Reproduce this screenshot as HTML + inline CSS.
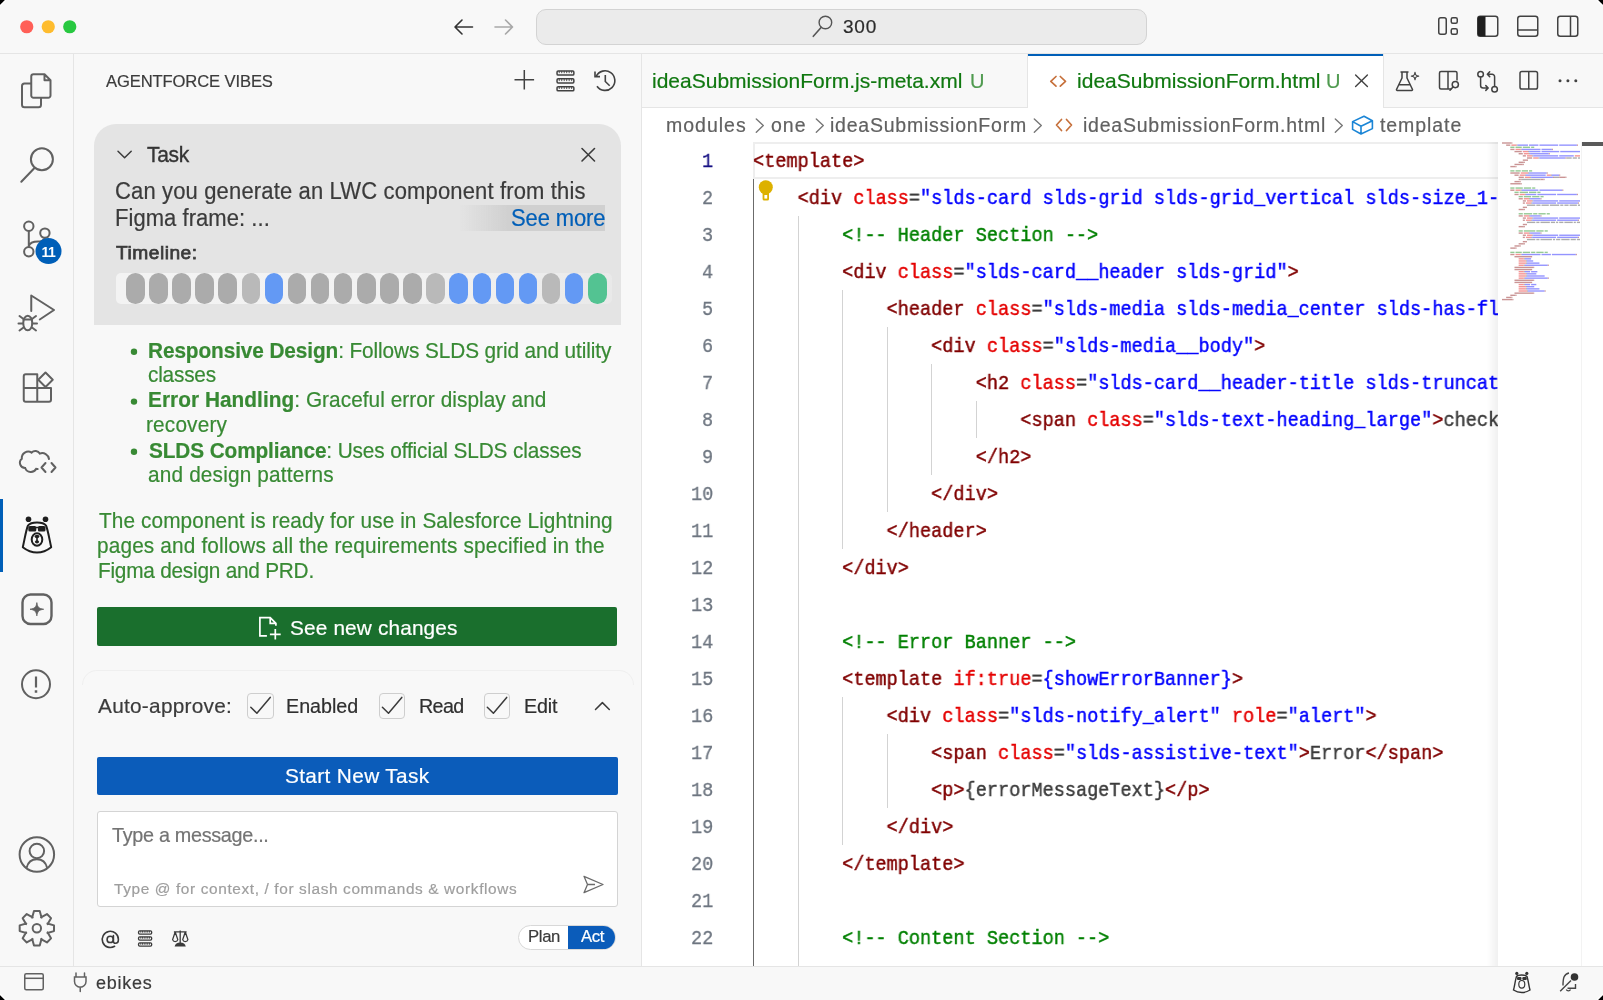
<!DOCTYPE html>
<html><head><meta charset="utf-8">
<style>
html,body{margin:0;padding:0;background:#000;}
body{width:1603px;height:1000px;overflow:hidden;position:relative;font-family:"Liberation Sans", sans-serif;}
#win{position:absolute;left:0;top:0;width:1603px;height:1000px;overflow:hidden;background:#f8f8f8;}
.t{position:absolute;white-space:pre;will-change:transform;}
.r{position:absolute;}
svg.ov{position:absolute;left:0;top:0;}
</style></head><body><div id="win">
<div class="r" style="left:0px;top:53px;width:1603px;height:1px;background:#e5e5e5;"></div><div class="r" style="left:536px;top:9px;width:611px;height:36px;box-sizing:border-box;border:1.3px solid #d3d3d3;border-radius:10px;background:#ebebeb"></div><div class="t" id="t300" style="left:842.50px;top:17.21px;font-size:19px;line-height:19px;color:#2b2b2b;letter-spacing:0.800px;-webkit-text-stroke:0.2px currentColor;">300</div><div class="r" style="left:73px;top:54px;width:1px;height:912px;background:#e5e5e5;"></div><div class="r" style="left:0px;top:499px;width:3px;height:73px;background:#005fb8;"></div><div class="r" style="left:0px;top:966px;width:1603px;height:1px;background:#e5e5e5;"></div><div class="t" id="ebikes" style="left:96.40px;top:973.96px;font-size:18px;line-height:18px;color:#3b3b3b;letter-spacing:0.720px;-webkit-text-stroke:0.2px currentColor;">ebikes</div><div class="r" style="left:641px;top:54px;width:1px;height:912px;background:#e5e5e5;"></div><div class="r" style="left:642px;top:107px;width:961px;height:1px;background:#e5e5e5;"></div><div class="r" style="left:1028px;top:54px;width:355px;height:54px;background:#ffffff;"></div><div class="r" style="left:1028px;top:54px;width:355px;height:2px;background:#005fb8;"></div><div class="r" style="left:1027px;top:54px;width:1px;height:53px;background:#e5e5e5;"></div><div class="r" style="left:1383px;top:54px;width:1px;height:53px;background:#e5e5e5;"></div><div class="r" style="left:642px;top:108px;width:961px;height:858px;background:#ffffff;"></div><div class="t" id="tab1" style="left:651.50px;top:70.02px;font-size:21px;line-height:21px;color:#107810;letter-spacing:-0.002px;-webkit-text-stroke:0.2px currentColor;">ideaSubmissionForm.js-meta.xml</div><div class="t" id="tab1u" style="left:970.30px;top:71.37px;font-size:20px;line-height:20px;color:#4f9a4f;letter-spacing:-4.000px;-webkit-text-stroke:0.2px currentColor;">U</div><div class="t" id="tab2" style="left:1076.50px;top:70.02px;font-size:21px;line-height:21px;color:#107810;letter-spacing:0.027px;-webkit-text-stroke:0.2px currentColor;">ideaSubmissionForm.html</div><div class="t" id="tab2u" style="left:1326.10px;top:71.37px;font-size:20px;line-height:20px;color:#4f9a4f;letter-spacing:1.400px;-webkit-text-stroke:0.2px currentColor;">U</div><div class="t" id="bc1" style="left:666.00px;top:115.69px;font-size:19.5px;line-height:19.5px;color:#616161;letter-spacing:1.000px;-webkit-text-stroke:0.2px currentColor;">modules</div><div class="t" id="bc2" style="left:771.00px;top:115.69px;font-size:19.5px;line-height:19.5px;color:#616161;letter-spacing:1.000px;-webkit-text-stroke:0.2px currentColor;">one</div><div class="t" id="bc3" style="left:830.00px;top:115.69px;font-size:19.5px;line-height:19.5px;color:#616161;letter-spacing:0.765px;-webkit-text-stroke:0.2px currentColor;">ideaSubmissionForm</div><div class="t" id="bc4" style="left:1083.00px;top:115.69px;font-size:19.5px;line-height:19.5px;color:#616161;letter-spacing:0.772px;-webkit-text-stroke:0.2px currentColor;">ideaSubmissionForm.html</div><div class="t" id="bc5" style="left:1380.20px;top:115.69px;font-size:19.5px;line-height:19.5px;color:#616161;letter-spacing:0.919px;-webkit-text-stroke:0.2px currentColor;">template</div><div class="r" style="left:753px;top:142px;width:760px;height:37px;box-sizing:border-box;border:2px solid #eeeeee;border-right:none"></div><div class="r" style="left:753.0px;top:179px;width:1.2000000000000455px;height:787px;background:#6b6b6b;"></div><div class="r" style="left:797.6px;top:216px;width:1.2000000000000455px;height:750px;background:#d3d3d3;"></div><div class="r" style="left:842.1px;top:290px;width:1.2000000000000455px;height:259px;background:#d3d3d3;"></div><div class="r" style="left:886.7px;top:327px;width:1.2000000000000455px;height:185px;background:#d3d3d3;"></div><div class="r" style="left:931.2px;top:364px;width:1.2000000000000455px;height:111px;background:#d3d3d3;"></div><div class="r" style="left:975.8px;top:401px;width:1.2000000000000455px;height:37px;background:#d3d3d3;"></div><div class="r" style="left:842.1px;top:697px;width:1.2000000000000455px;height:148px;background:#d3d3d3;"></div><div class="r" style="left:886.7px;top:734px;width:1.2000000000000455px;height:74px;background:#d3d3d3;"></div><div class="t" style="left:701.86px;top:151.57px;font-size:20.4px;line-height:20.4px;color:#171184;font-family:'Liberation Mono', monospace;transform:scaleX(0.9099942198212753);transform-origin:0 0;-webkit-text-stroke:0.3px currentColor;">1</div><div class="t" style="left:753.00px;top:151.57px;font-size:20.4px;line-height:20.4px;color:#3b3b3b;font-family:'Liberation Mono', monospace;transform:scaleX(0.9099942198212753);transform-origin:0 0;-webkit-text-stroke:0.45px currentColor;"><span style="color:#800000">&lt;template</span><span style="color:#800000">&gt;</span></div><div class="t" style="left:701.86px;top:188.57px;font-size:20.4px;line-height:20.4px;color:#6e7681;font-family:'Liberation Mono', monospace;transform:scaleX(0.9099942198212753);transform-origin:0 0;-webkit-text-stroke:0.3px currentColor;">2</div><div class="t" style="left:753.00px;top:188.57px;font-size:20.4px;line-height:20.4px;color:#3b3b3b;font-family:'Liberation Mono', monospace;transform:scaleX(0.9099942198212753);transform-origin:0 0;-webkit-text-stroke:0.45px currentColor;"><span style="color:#3b3b3b">    </span><span style="color:#800000">&lt;div</span><span style="color:#3b3b3b"> </span><span style="color:#e50000">class</span><span style="color:#3b3b3b">=</span><span style="color:#0000ff">&quot;slds-card slds-grid slds-grid_vertical slds-size_1-of-1&quot;</span><span style="color:#800000">&gt;</span></div><div class="t" style="left:701.86px;top:225.57px;font-size:20.4px;line-height:20.4px;color:#6e7681;font-family:'Liberation Mono', monospace;transform:scaleX(0.9099942198212753);transform-origin:0 0;-webkit-text-stroke:0.3px currentColor;">3</div><div class="t" style="left:753.00px;top:225.57px;font-size:20.4px;line-height:20.4px;color:#3b3b3b;font-family:'Liberation Mono', monospace;transform:scaleX(0.9099942198212753);transform-origin:0 0;-webkit-text-stroke:0.45px currentColor;"><span style="color:#3b3b3b">        </span><span style="color:#008000">&lt;!-- Header Section --&gt;</span></div><div class="t" style="left:701.86px;top:262.57px;font-size:20.4px;line-height:20.4px;color:#6e7681;font-family:'Liberation Mono', monospace;transform:scaleX(0.9099942198212753);transform-origin:0 0;-webkit-text-stroke:0.3px currentColor;">4</div><div class="t" style="left:753.00px;top:262.57px;font-size:20.4px;line-height:20.4px;color:#3b3b3b;font-family:'Liberation Mono', monospace;transform:scaleX(0.9099942198212753);transform-origin:0 0;-webkit-text-stroke:0.45px currentColor;"><span style="color:#3b3b3b">        </span><span style="color:#800000">&lt;div</span><span style="color:#3b3b3b"> </span><span style="color:#e50000">class</span><span style="color:#3b3b3b">=</span><span style="color:#0000ff">&quot;slds-card__header slds-grid&quot;</span><span style="color:#800000">&gt;</span></div><div class="t" style="left:701.86px;top:299.57px;font-size:20.4px;line-height:20.4px;color:#6e7681;font-family:'Liberation Mono', monospace;transform:scaleX(0.9099942198212753);transform-origin:0 0;-webkit-text-stroke:0.3px currentColor;">5</div><div class="t" style="left:753.00px;top:299.57px;font-size:20.4px;line-height:20.4px;color:#3b3b3b;font-family:'Liberation Mono', monospace;transform:scaleX(0.9099942198212753);transform-origin:0 0;-webkit-text-stroke:0.45px currentColor;"><span style="color:#3b3b3b">            </span><span style="color:#800000">&lt;header</span><span style="color:#3b3b3b"> </span><span style="color:#e50000">class</span><span style="color:#3b3b3b">=</span><span style="color:#0000ff">&quot;slds-media slds-media_center slds-has-flexi-truncate&quot;</span><span style="color:#800000">&gt;</span></div><div class="t" style="left:701.86px;top:336.57px;font-size:20.4px;line-height:20.4px;color:#6e7681;font-family:'Liberation Mono', monospace;transform:scaleX(0.9099942198212753);transform-origin:0 0;-webkit-text-stroke:0.3px currentColor;">6</div><div class="t" style="left:753.00px;top:336.57px;font-size:20.4px;line-height:20.4px;color:#3b3b3b;font-family:'Liberation Mono', monospace;transform:scaleX(0.9099942198212753);transform-origin:0 0;-webkit-text-stroke:0.45px currentColor;"><span style="color:#3b3b3b">                </span><span style="color:#800000">&lt;div</span><span style="color:#3b3b3b"> </span><span style="color:#e50000">class</span><span style="color:#3b3b3b">=</span><span style="color:#0000ff">&quot;slds-media__body&quot;</span><span style="color:#800000">&gt;</span></div><div class="t" style="left:701.86px;top:373.57px;font-size:20.4px;line-height:20.4px;color:#6e7681;font-family:'Liberation Mono', monospace;transform:scaleX(0.9099942198212753);transform-origin:0 0;-webkit-text-stroke:0.3px currentColor;">7</div><div class="t" style="left:753.00px;top:373.57px;font-size:20.4px;line-height:20.4px;color:#3b3b3b;font-family:'Liberation Mono', monospace;transform:scaleX(0.9099942198212753);transform-origin:0 0;-webkit-text-stroke:0.45px currentColor;"><span style="color:#3b3b3b">                    </span><span style="color:#800000">&lt;h2</span><span style="color:#3b3b3b"> </span><span style="color:#e50000">class</span><span style="color:#3b3b3b">=</span><span style="color:#0000ff">&quot;slds-card__header-title slds-truncate&quot;</span><span style="color:#3b3b3b"> </span><span style="color:#e50000">title</span><span style="color:#3b3b3b">=</span><span style="color:#0000ff">&quot;Submit&quot;</span><span style="color:#800000">&gt;</span></div><div class="t" style="left:701.86px;top:410.57px;font-size:20.4px;line-height:20.4px;color:#6e7681;font-family:'Liberation Mono', monospace;transform:scaleX(0.9099942198212753);transform-origin:0 0;-webkit-text-stroke:0.3px currentColor;">8</div><div class="t" style="left:753.00px;top:410.57px;font-size:20.4px;line-height:20.4px;color:#3b3b3b;font-family:'Liberation Mono', monospace;transform:scaleX(0.9099942198212753);transform-origin:0 0;-webkit-text-stroke:0.45px currentColor;"><span style="color:#3b3b3b">                        </span><span style="color:#800000">&lt;span</span><span style="color:#3b3b3b"> </span><span style="color:#e50000">class</span><span style="color:#3b3b3b">=</span><span style="color:#0000ff">&quot;slds-text-heading_large&quot;</span><span style="color:#800000">&gt;</span><span style="color:#3b3b3b">check data here</span><span style="color:#800000">&lt;/span</span><span style="color:#800000">&gt;</span></div><div class="t" style="left:701.86px;top:447.57px;font-size:20.4px;line-height:20.4px;color:#6e7681;font-family:'Liberation Mono', monospace;transform:scaleX(0.9099942198212753);transform-origin:0 0;-webkit-text-stroke:0.3px currentColor;">9</div><div class="t" style="left:753.00px;top:447.57px;font-size:20.4px;line-height:20.4px;color:#3b3b3b;font-family:'Liberation Mono', monospace;transform:scaleX(0.9099942198212753);transform-origin:0 0;-webkit-text-stroke:0.45px currentColor;"><span style="color:#3b3b3b">                    </span><span style="color:#800000">&lt;/h2</span><span style="color:#800000">&gt;</span></div><div class="t" style="left:690.72px;top:484.57px;font-size:20.4px;line-height:20.4px;color:#6e7681;font-family:'Liberation Mono', monospace;transform:scaleX(0.9099942198212753);transform-origin:0 0;-webkit-text-stroke:0.3px currentColor;">10</div><div class="t" style="left:753.00px;top:484.57px;font-size:20.4px;line-height:20.4px;color:#3b3b3b;font-family:'Liberation Mono', monospace;transform:scaleX(0.9099942198212753);transform-origin:0 0;-webkit-text-stroke:0.45px currentColor;"><span style="color:#3b3b3b">                </span><span style="color:#800000">&lt;/div</span><span style="color:#800000">&gt;</span></div><div class="t" style="left:690.72px;top:521.57px;font-size:20.4px;line-height:20.4px;color:#6e7681;font-family:'Liberation Mono', monospace;transform:scaleX(0.9099942198212753);transform-origin:0 0;-webkit-text-stroke:0.3px currentColor;">11</div><div class="t" style="left:753.00px;top:521.57px;font-size:20.4px;line-height:20.4px;color:#3b3b3b;font-family:'Liberation Mono', monospace;transform:scaleX(0.9099942198212753);transform-origin:0 0;-webkit-text-stroke:0.45px currentColor;"><span style="color:#3b3b3b">            </span><span style="color:#800000">&lt;/header</span><span style="color:#800000">&gt;</span></div><div class="t" style="left:690.72px;top:558.57px;font-size:20.4px;line-height:20.4px;color:#6e7681;font-family:'Liberation Mono', monospace;transform:scaleX(0.9099942198212753);transform-origin:0 0;-webkit-text-stroke:0.3px currentColor;">12</div><div class="t" style="left:753.00px;top:558.57px;font-size:20.4px;line-height:20.4px;color:#3b3b3b;font-family:'Liberation Mono', monospace;transform:scaleX(0.9099942198212753);transform-origin:0 0;-webkit-text-stroke:0.45px currentColor;"><span style="color:#3b3b3b">        </span><span style="color:#800000">&lt;/div</span><span style="color:#800000">&gt;</span></div><div class="t" style="left:690.72px;top:595.57px;font-size:20.4px;line-height:20.4px;color:#6e7681;font-family:'Liberation Mono', monospace;transform:scaleX(0.9099942198212753);transform-origin:0 0;-webkit-text-stroke:0.3px currentColor;">13</div><div class="t" style="left:690.72px;top:632.57px;font-size:20.4px;line-height:20.4px;color:#6e7681;font-family:'Liberation Mono', monospace;transform:scaleX(0.9099942198212753);transform-origin:0 0;-webkit-text-stroke:0.3px currentColor;">14</div><div class="t" style="left:753.00px;top:632.57px;font-size:20.4px;line-height:20.4px;color:#3b3b3b;font-family:'Liberation Mono', monospace;transform:scaleX(0.9099942198212753);transform-origin:0 0;-webkit-text-stroke:0.45px currentColor;"><span style="color:#3b3b3b">        </span><span style="color:#008000">&lt;!-- Error Banner --&gt;</span></div><div class="t" style="left:690.72px;top:669.57px;font-size:20.4px;line-height:20.4px;color:#6e7681;font-family:'Liberation Mono', monospace;transform:scaleX(0.9099942198212753);transform-origin:0 0;-webkit-text-stroke:0.3px currentColor;">15</div><div class="t" style="left:753.00px;top:669.57px;font-size:20.4px;line-height:20.4px;color:#3b3b3b;font-family:'Liberation Mono', monospace;transform:scaleX(0.9099942198212753);transform-origin:0 0;-webkit-text-stroke:0.45px currentColor;"><span style="color:#3b3b3b">        </span><span style="color:#800000">&lt;template</span><span style="color:#3b3b3b"> </span><span style="color:#e50000">if:true</span><span style="color:#3b3b3b">=</span><span style="color:#0000ff">{showErrorBanner}</span><span style="color:#800000">&gt;</span></div><div class="t" style="left:690.72px;top:706.57px;font-size:20.4px;line-height:20.4px;color:#6e7681;font-family:'Liberation Mono', monospace;transform:scaleX(0.9099942198212753);transform-origin:0 0;-webkit-text-stroke:0.3px currentColor;">16</div><div class="t" style="left:753.00px;top:706.57px;font-size:20.4px;line-height:20.4px;color:#3b3b3b;font-family:'Liberation Mono', monospace;transform:scaleX(0.9099942198212753);transform-origin:0 0;-webkit-text-stroke:0.45px currentColor;"><span style="color:#3b3b3b">            </span><span style="color:#800000">&lt;div</span><span style="color:#3b3b3b"> </span><span style="color:#e50000">class</span><span style="color:#3b3b3b">=</span><span style="color:#0000ff">&quot;slds-notify_alert&quot;</span><span style="color:#3b3b3b"> </span><span style="color:#e50000">role</span><span style="color:#3b3b3b">=</span><span style="color:#0000ff">&quot;alert&quot;</span><span style="color:#800000">&gt;</span></div><div class="t" style="left:690.72px;top:743.57px;font-size:20.4px;line-height:20.4px;color:#6e7681;font-family:'Liberation Mono', monospace;transform:scaleX(0.9099942198212753);transform-origin:0 0;-webkit-text-stroke:0.3px currentColor;">17</div><div class="t" style="left:753.00px;top:743.57px;font-size:20.4px;line-height:20.4px;color:#3b3b3b;font-family:'Liberation Mono', monospace;transform:scaleX(0.9099942198212753);transform-origin:0 0;-webkit-text-stroke:0.45px currentColor;"><span style="color:#3b3b3b">                </span><span style="color:#800000">&lt;span</span><span style="color:#3b3b3b"> </span><span style="color:#e50000">class</span><span style="color:#3b3b3b">=</span><span style="color:#0000ff">&quot;slds-assistive-text&quot;</span><span style="color:#800000">&gt;</span><span style="color:#3b3b3b">Error</span><span style="color:#800000">&lt;/span</span><span style="color:#800000">&gt;</span></div><div class="t" style="left:690.72px;top:780.57px;font-size:20.4px;line-height:20.4px;color:#6e7681;font-family:'Liberation Mono', monospace;transform:scaleX(0.9099942198212753);transform-origin:0 0;-webkit-text-stroke:0.3px currentColor;">18</div><div class="t" style="left:753.00px;top:780.57px;font-size:20.4px;line-height:20.4px;color:#3b3b3b;font-family:'Liberation Mono', monospace;transform:scaleX(0.9099942198212753);transform-origin:0 0;-webkit-text-stroke:0.45px currentColor;"><span style="color:#3b3b3b">                </span><span style="color:#800000">&lt;p</span><span style="color:#800000">&gt;</span><span style="color:#3b3b3b">{errorMessageText}</span><span style="color:#800000">&lt;/p</span><span style="color:#800000">&gt;</span></div><div class="t" style="left:690.72px;top:817.57px;font-size:20.4px;line-height:20.4px;color:#6e7681;font-family:'Liberation Mono', monospace;transform:scaleX(0.9099942198212753);transform-origin:0 0;-webkit-text-stroke:0.3px currentColor;">19</div><div class="t" style="left:753.00px;top:817.57px;font-size:20.4px;line-height:20.4px;color:#3b3b3b;font-family:'Liberation Mono', monospace;transform:scaleX(0.9099942198212753);transform-origin:0 0;-webkit-text-stroke:0.45px currentColor;"><span style="color:#3b3b3b">            </span><span style="color:#800000">&lt;/div</span><span style="color:#800000">&gt;</span></div><div class="t" style="left:690.72px;top:854.57px;font-size:20.4px;line-height:20.4px;color:#6e7681;font-family:'Liberation Mono', monospace;transform:scaleX(0.9099942198212753);transform-origin:0 0;-webkit-text-stroke:0.3px currentColor;">20</div><div class="t" style="left:753.00px;top:854.57px;font-size:20.4px;line-height:20.4px;color:#3b3b3b;font-family:'Liberation Mono', monospace;transform:scaleX(0.9099942198212753);transform-origin:0 0;-webkit-text-stroke:0.45px currentColor;"><span style="color:#3b3b3b">        </span><span style="color:#800000">&lt;/template</span><span style="color:#800000">&gt;</span></div><div class="t" style="left:690.72px;top:891.57px;font-size:20.4px;line-height:20.4px;color:#6e7681;font-family:'Liberation Mono', monospace;transform:scaleX(0.9099942198212753);transform-origin:0 0;-webkit-text-stroke:0.3px currentColor;">21</div><div class="t" style="left:690.72px;top:928.57px;font-size:20.4px;line-height:20.4px;color:#6e7681;font-family:'Liberation Mono', monospace;transform:scaleX(0.9099942198212753);transform-origin:0 0;-webkit-text-stroke:0.3px currentColor;">22</div><div class="t" style="left:753.00px;top:928.57px;font-size:20.4px;line-height:20.4px;color:#3b3b3b;font-family:'Liberation Mono', monospace;transform:scaleX(0.9099942198212753);transform-origin:0 0;-webkit-text-stroke:0.45px currentColor;"><span style="color:#3b3b3b">        </span><span style="color:#008000">&lt;!-- Content Section --&gt;</span></div><div class="r" style="left:1487px;top:142px;width:11px;height:824px;background:linear-gradient(to right, rgba(0,0,0,0), rgba(0,0,0,0.06))"></div><div class="r" style="left:1498px;top:142px;width:105px;height:824px;background:#ffffff;"></div><div class="r" style="left:1581px;top:142px;width:1px;height:824px;background:#f3f3f3;"></div><div class="r" style="left:1582px;top:142px;width:21px;height:3.5px;background:#5a5a5a;"></div><div class="t" id="hdr" style="left:105.60px;top:73.94px;font-size:16.6px;line-height:16.6px;color:#3b3b3b;letter-spacing:-0.122px;-webkit-text-stroke:0.2px currentColor;">AGENTFORCE VIBES</div><div class="r" style="left:94px;top:124px;width:527px;height:201px;background:#e4e4e4;border-radius:22px 22px 0 0"></div><div class="t" id="task" style="left:147.00px;top:143.62px;font-size:21px;line-height:21px;color:#353535;letter-spacing:-0.333px;transform:scaleY(1.07);transform-origin:0 17.78px;-webkit-text-stroke:0.35px currentColor;">Task</div><div class="t" id="can" style="left:115.00px;top:181.27px;font-size:22px;line-height:22px;color:#3b3b3b;letter-spacing:0.148px;transform:scaleY(1.05);transform-origin:0 18.63px;-webkit-text-stroke:0.2px currentColor;">Can you generate an LWC component from this</div><div class="t" id="figma" style="left:115.00px;top:208.07px;font-size:22px;line-height:22px;color:#3b3b3b;letter-spacing:0.051px;transform:scaleY(1.05);transform-origin:0 18.63px;-webkit-text-stroke:0.2px currentColor;">Figma frame: ...</div><div class="r" style="left:460px;top:205px;width:145px;height:26px;background:linear-gradient(to right, rgba(208,208,208,0) 0px, #d0d0d0 47px)"></div><div class="t" id="seemore" style="left:510.50px;top:208.07px;font-size:22px;line-height:22px;color:#005fb8;letter-spacing:-0.123px;transform:scaleY(1.05);transform-origin:0 18.63px;-webkit-text-stroke:0.2px currentColor;">See more</div><div class="t" id="timeline" style="left:115.50px;top:242.64px;font-size:19.2px;line-height:19.2px;color:#3b3b3b;letter-spacing:0.500px;-webkit-text-stroke:0.75px currentColor;">Timeline:</div><div class="r" style="left:116px;top:273px;width:496px;height:31px;background:linear-gradient(to right,#f3f3f3 0%,#f2f2f2 60%,#e9e9e9 100%);border-radius:5px"></div><div class="r" style="left:126.00px;top:273px;width:18.6px;height:31px;background:#ababab;border-radius:9.3px"></div><div class="r" style="left:149.10px;top:273px;width:18.6px;height:31px;background:#ababab;border-radius:9.3px"></div><div class="r" style="left:172.20px;top:273px;width:18.6px;height:31px;background:#ababab;border-radius:9.3px"></div><div class="r" style="left:195.30px;top:273px;width:18.6px;height:31px;background:#ababab;border-radius:9.3px"></div><div class="r" style="left:218.40px;top:273px;width:18.6px;height:31px;background:#ababab;border-radius:9.3px"></div><div class="r" style="left:241.50px;top:273px;width:18.6px;height:31px;background:#b9b9b9;border-radius:9.3px"></div><div class="r" style="left:264.60px;top:273px;width:18.6px;height:31px;background:#6399f4;border-radius:9.3px"></div><div class="r" style="left:287.70px;top:273px;width:18.6px;height:31px;background:#ababab;border-radius:9.3px"></div><div class="r" style="left:310.80px;top:273px;width:18.6px;height:31px;background:#ababab;border-radius:9.3px"></div><div class="r" style="left:333.90px;top:273px;width:18.6px;height:31px;background:#ababab;border-radius:9.3px"></div><div class="r" style="left:357.00px;top:273px;width:18.6px;height:31px;background:#ababab;border-radius:9.3px"></div><div class="r" style="left:380.10px;top:273px;width:18.6px;height:31px;background:#ababab;border-radius:9.3px"></div><div class="r" style="left:403.20px;top:273px;width:18.6px;height:31px;background:#ababab;border-radius:9.3px"></div><div class="r" style="left:426.30px;top:273px;width:18.6px;height:31px;background:#b9b9b9;border-radius:9.3px"></div><div class="r" style="left:449.40px;top:273px;width:18.6px;height:31px;background:#6399f4;border-radius:9.3px"></div><div class="r" style="left:472.50px;top:273px;width:18.6px;height:31px;background:#6399f4;border-radius:9.3px"></div><div class="r" style="left:495.60px;top:273px;width:18.6px;height:31px;background:#6399f4;border-radius:9.3px"></div><div class="r" style="left:518.70px;top:273px;width:18.6px;height:31px;background:#6399f4;border-radius:9.3px"></div><div class="r" style="left:541.80px;top:273px;width:18.6px;height:31px;background:#b9b9b9;border-radius:9.3px"></div><div class="r" style="left:564.90px;top:273px;width:18.6px;height:31px;background:#6399f4;border-radius:9.3px"></div><div class="r" style="left:588.00px;top:273px;width:18.6px;height:31px;background:#53c392;border-radius:9.3px"></div><div class="t" id="l1" style="left:148.00px;top:340.79px;font-size:20.8px;line-height:20.8px;color:#388a34;letter-spacing:-0.100px;transform:scaleY(1.05);transform-origin:0 17.61px;-webkit-text-stroke:0.2px currentColor;"><b>Responsive Design</b>: Follows SLDS grid and utility</div><div class="t" id="l2" style="left:148.20px;top:365.49px;font-size:20.8px;line-height:20.8px;color:#388a34;letter-spacing:-0.204px;transform:scaleY(1.05);transform-origin:0 17.61px;-webkit-text-stroke:0.2px currentColor;">classes</div><div class="t" id="l3" style="left:148.00px;top:390.29px;font-size:20.8px;line-height:20.8px;color:#388a34;letter-spacing:0.047px;transform:scaleY(1.05);transform-origin:0 17.61px;-webkit-text-stroke:0.2px currentColor;"><b>Error Handling</b>: Graceful error display and</div><div class="t" id="l4" style="left:146.40px;top:415.39px;font-size:20.8px;line-height:20.8px;color:#388a34;letter-spacing:0.163px;transform:scaleY(1.05);transform-origin:0 17.61px;-webkit-text-stroke:0.2px currentColor;">recovery</div><div class="t" id="l5" style="left:149.00px;top:440.59px;font-size:20.8px;line-height:20.8px;color:#388a34;letter-spacing:-0.119px;transform:scaleY(1.05);transform-origin:0 17.61px;-webkit-text-stroke:0.2px currentColor;"><b>SLDS Compliance</b>: Uses official SLDS classes</div><div class="t" id="l6" style="left:148.20px;top:465.29px;font-size:20.8px;line-height:20.8px;color:#388a34;letter-spacing:0.166px;transform:scaleY(1.05);transform-origin:0 17.61px;-webkit-text-stroke:0.2px currentColor;">and design patterns</div><div class="t" id="p1" style="left:98.60px;top:511.09px;font-size:20.8px;line-height:20.8px;color:#388a34;letter-spacing:0.094px;transform:scaleY(1.05);transform-origin:0 17.61px;-webkit-text-stroke:0.2px currentColor;">The component is ready for use in Salesforce Lightning</div><div class="t" id="p2" style="left:97.00px;top:536.29px;font-size:20.8px;line-height:20.8px;color:#388a34;letter-spacing:0.149px;transform:scaleY(1.05);transform-origin:0 17.61px;-webkit-text-stroke:0.2px currentColor;">pages and follows all the requirements specified in the</div><div class="t" id="p3" style="left:97.60px;top:561.39px;font-size:20.8px;line-height:20.8px;color:#388a34;letter-spacing:-0.230px;transform:scaleY(1.05);transform-origin:0 17.61px;-webkit-text-stroke:0.2px currentColor;">Figma design and PRD.</div><div class="r" style="left:97px;top:607px;width:520px;height:39.4px;background:#1a6f2d;border-radius:2px"></div><div class="t" id="snc" style="left:289.70px;top:618.09px;font-size:20.8px;line-height:20.8px;color:#ffffff;letter-spacing:0.150px;-webkit-text-stroke:0.2px currentColor;">See new changes</div><div class="r" style="left:81.5px;top:669.5px;width:552px;height:15px;border:1.2px solid #efefef;border-bottom:none;border-radius:15px 15px 0 0;box-sizing:border-box"></div><div class="t" id="aa" style="left:97.80px;top:696.19px;font-size:20.8px;line-height:20.8px;color:#3b3b3b;letter-spacing:0.269px;-webkit-text-stroke:0.2px currentColor;">Auto-approve:</div><div class="r" style="left:247px;top:692.5px;width:26.5px;height:26px;box-sizing:border-box;border:1.2px solid #cecece;border-radius:4px;background:#f8f8f8"></div><div class="r" style="left:378.6px;top:692.5px;width:26.5px;height:26px;box-sizing:border-box;border:1.2px solid #cecece;border-radius:4px;background:#f8f8f8"></div><div class="r" style="left:483.5px;top:692.5px;width:26.5px;height:26px;box-sizing:border-box;border:1.2px solid #cecece;border-radius:4px;background:#f8f8f8"></div><div class="t" id="en" style="left:286.30px;top:696.72px;font-size:19.7px;line-height:19.7px;color:#2f2f2f;-webkit-text-stroke:0.2px currentColor;">Enabled</div><div class="t" id="rd" style="left:418.70px;top:696.72px;font-size:19.7px;line-height:19.7px;color:#2f2f2f;letter-spacing:-0.628px;-webkit-text-stroke:0.2px currentColor;">Read</div><div class="t" id="ed" style="left:523.60px;top:696.72px;font-size:19.7px;line-height:19.7px;color:#2f2f2f;letter-spacing:-0.127px;-webkit-text-stroke:0.2px currentColor;">Edit</div><div class="r" style="left:97px;top:757px;width:520.6px;height:37.6px;background:#0b5cba;border-radius:2px"></div><div class="t" id="snt" style="left:285.20px;top:766.09px;font-size:20.8px;line-height:20.8px;color:#ffffff;letter-spacing:0.360px;-webkit-text-stroke:0.2px currentColor;">Start New Task</div><div class="r" style="left:97px;top:811px;width:520.6px;height:96.3px;box-sizing:border-box;border:1.2px solid #d4d4d4;border-radius:3px;background:#ffffff"></div><div class="t" id="tam" style="left:112.10px;top:826.34px;font-size:19.8px;line-height:19.8px;color:#737373;letter-spacing:-0.298px;-webkit-text-stroke:0.2px currentColor;">Type a message...</div><div class="t" id="hint" style="left:113.50px;top:880.56px;font-size:15.4px;line-height:15.4px;color:#9e9e9e;letter-spacing:0.630px;-webkit-text-stroke:0.2px currentColor;">Type @ for context, / for slash commands &amp; workflows</div><div class="r" style="left:517.5px;top:924.8px;width:98.7px;height:25.2px;box-sizing:border-box;border:1px solid #d8d8d8;border-radius:13px;background:#ffffff;overflow:hidden"><div style="position:absolute;left:49px;top:-1px;width:50px;height:27px;background:#0b5cba"></div></div><div class="t" id="plan" style="left:528.00px;top:928.96px;font-size:16.7px;line-height:16.7px;color:#3b3b3b;letter-spacing:-0.333px;-webkit-text-stroke:0.2px currentColor;">Plan</div><div class="t" id="act" style="left:581.20px;top:928.96px;font-size:16.7px;line-height:16.7px;color:#ffffff;letter-spacing:-0.300px;-webkit-text-stroke:0.2px currentColor;">Act</div>
<svg class="ov" width="1603" height="1000" viewBox="0 0 1603 1000">
<circle cx="26.75" cy="26.75" r="6.6" fill="#ff5f57"/><circle cx="48.25" cy="26.75" r="6.6" fill="#febc2e"/><circle cx="69.75" cy="26.75" r="6.6" fill="#28c840"/><path d="M472.5,27 H455.5 M462,20 L455,27 L462,34" fill="none" stroke="#333" stroke-width="1.6" stroke-linecap="round" stroke-linejoin="round"/><path d="M495,27 H512 M505.5,20 L512.5,27 L505.5,34" fill="none" stroke="#a8a8a8" stroke-width="1.6" stroke-linecap="round" stroke-linejoin="round"/><circle cx="825.4" cy="22.5" r="6.3" fill="none" stroke="#555" stroke-width="1.4"/><path d="M821.3,27.3 L813.3,36.3" stroke="#555" stroke-width="1.6" stroke-linecap="round"/><rect x="1438.75" y="17.75" width="7.5" height="16.5" rx="2" fill="none" stroke="#424242" stroke-width="1.5"/><rect x="1451.25" y="17.75" width="6" height="5.5" rx="1.5" fill="none" stroke="#424242" stroke-width="1.5"/><rect x="1451.25" y="28.75" width="6" height="5.5" rx="1.5" fill="none" stroke="#424242" stroke-width="1.5"/><rect x="1477.75" y="16.25" width="20" height="20" rx="2.5" fill="none" stroke="#424242" stroke-width="1.5"/><path d="M1480,16.25 H1485.5 V36.25 H1480 A2.25,2.25 0 0 1 1477.75,34 V18.5 A2.25,2.25 0 0 1 1480,16.25Z" fill="#1f1f1f"/><rect x="1517.75" y="16.25" width="20" height="20" rx="2.5" fill="none" stroke="#424242" stroke-width="1.5"/><path d="M1517.75,30 H1537.75" stroke="#424242" stroke-width="1.5"/><rect x="1557.75" y="16.25" width="20" height="20" rx="2.5" fill="none" stroke="#424242" stroke-width="1.5"/><path d="M1570.5,16.25 V36.25" stroke="#424242" stroke-width="1.5"/><path d="M33.5,74.25 H44.5 L50.5,80.25 V95.5 A2.25,2.25 0 0 1 48.25,97.75 H33.5 A2.25,2.25 0 0 1 31.25,95.5 V76.5 A2.25,2.25 0 0 1 33.5,74.25Z M44.5,74.25 V80.25 H50.5" fill="none" stroke="#616161" stroke-width="2" stroke-linejoin="round"/><path d="M31.25,83.5 H24.5 A2.5,2.5 0 0 0 22,86 V104.75 A2.5,2.5 0 0 0 24.5,107.25 H38.5 A2.5,2.5 0 0 0 41,104.75 V97.75" fill="none" stroke="#616161" stroke-width="2"/><circle cx="41.9" cy="159.2" r="11" fill="none" stroke="#616161" stroke-width="2"/><path d="M34,168.5 L21.3,181.8" stroke="#616161" stroke-width="2" stroke-linecap="round"/><circle cx="28.8" cy="226.2" r="4.7" fill="none" stroke="#616161" stroke-width="2"/><circle cx="28.8" cy="251.7" r="4.7" fill="none" stroke="#616161" stroke-width="2"/><circle cx="44.9" cy="233.1" r="4.7" fill="none" stroke="#616161" stroke-width="2"/><path d="M28.8,230.9 V247 M28.8,246 C30,242 34,241.5 38,241.5 C41,241.5 44,240 44.9,237.8" fill="none" stroke="#616161" stroke-width="2"/><circle cx="48.5" cy="251.1" r="13" fill="#005fb8"/><text x="48.3" y="256.6" font-family="Liberation Sans" font-weight="700" font-size="14" fill="#fff" text-anchor="middle" letter-spacing="-0.5">11</text><path d="M31.25,311 V295.5 L54,310 L39.75,319.5" fill="none" stroke="#616161" stroke-width="2" stroke-linejoin="round" stroke-linecap="round"/><ellipse cx="27.75" cy="323" rx="4.5" ry="7.3" fill="none" stroke="#616161" stroke-width="2"/><path d="M23.5,319.5 H32 M19.5,316 L23.5,319 M36,316 L32,319 M18.5,323.5 H23 M32.5,323.5 H37 M19.5,330.5 L23.5,327.5 M36,330.5 L32,327.5" fill="none" stroke="#616161" stroke-width="2" stroke-linecap="round"/><path d="M37.25,388 V374.25 H25.75 A2,2 0 0 0 23.75,376.25 V399.75 A2,2 0 0 0 25.75,401.75 H49 A2,2 0 0 0 51,399.75 V388 H23.75 M37.25,388 V401.75" fill="none" stroke="#616161" stroke-width="2" stroke-linejoin="round"/><path d="M45.5,372.5 L52.75,379.75 L45.5,387 L38.25,379.75Z" fill="none" stroke="#616161" stroke-width="2" stroke-linejoin="round"/><path d="M49,459 A6.8,6.8 0 0 0 39.8,453.6 A5,5 0 0 0 31.6,452.6 A6.5,6.5 0 0 0 21.8,458.8 A5.2,5.2 0 0 0 25.2,468 A6,6 0 0 0 36.2,468.8 L37.6,469" fill="none" stroke="#616161" stroke-width="2" stroke-linecap="round"/><path d="M45.5,463 L41.5,467.5 L45.5,472 M51.5,463 L55.5,467.5 L51.5,472" fill="none" stroke="#616161" stroke-width="2" stroke-linecap="round" stroke-linejoin="round"/><circle cx="28.5" cy="519.3" r="2.8" fill="#1f1f1f"/><circle cx="45.5" cy="519.3" r="2.8" fill="#1f1f1f"/><path d="M28,525.5 C31,521.5 43,521.5 46,525.5 C48,530 49.5,540 51.2,547.2 C47,550.5 41,552.5 37,552.5 C33,552.5 27,550.5 22.8,547.2 C24.5,540 26,530 28,525.5Z" fill="none" stroke="#1f1f1f" stroke-width="2" stroke-linejoin="round"/><rect x="28.3" y="526" width="8" height="5.6" rx="1.5" fill="#1f1f1f"/><rect x="37.9" y="526" width="7.6" height="5.6" rx="1.5" fill="#1f1f1f"/><path d="M36,527.5 H38.5" stroke="#1f1f1f" stroke-width="1.5"/><ellipse cx="37" cy="539.5" rx="5.3" ry="6.3" fill="none" stroke="#1f1f1f" stroke-width="2"/><ellipse cx="37" cy="536.4" rx="2.4" ry="1.7" fill="#1f1f1f"/><ellipse cx="37" cy="541.8" rx="2.1" ry="1.6" fill="#1f1f1f"/><rect x="36.2" y="536.5" width="1.6" height="5" fill="#1f1f1f"/><rect x="22.5" y="594.5" width="29" height="29.5" rx="8" fill="none" stroke="#616161" stroke-width="2.4"/><path d="M36.85,602.6 C37.6,607.3 38.8,608.5 43.7,609.25 C38.8,610 37.6,611.2 36.85,615.9 C36.1,611.2 34.9,610 30,609.25 C34.9,608.5 36.1,607.3 36.85,602.6Z" fill="#616161" stroke="#616161" stroke-width="0.8" stroke-linejoin="round"/><circle cx="36" cy="684.25" r="14" fill="none" stroke="#616161" stroke-width="2"/><path d="M36,676.5 V687.5" stroke="#616161" stroke-width="2.2"/><rect x="34.75" y="690.25" width="2.5" height="2.5" fill="#616161"/><circle cx="36.85" cy="854.5" r="17.25" fill="none" stroke="#616161" stroke-width="2"/><circle cx="36.85" cy="851" r="7.25" fill="none" stroke="#616161" stroke-width="2"/><path d="M26.6,867.8 C28,862 32,859.3 36.85,859.3 C41.7,859.3 45.7,862 47.1,867.8" fill="none" stroke="#616161" stroke-width="2"/><path d="M32.13,917.65 L33.98,911.09 L39.72,911.09 L41.57,917.65 L41.01,917.42 L46.95,914.08 L51.02,918.15 L47.68,924.09 L47.45,923.53 L54.01,925.38 L54.01,931.12 L47.45,932.97 L47.68,932.41 L51.02,938.35 L46.95,942.42 L41.01,939.08 L41.57,938.85 L39.72,945.41 L33.98,945.41 L32.13,938.85 L32.69,939.08 L26.75,942.42 L22.68,938.35 L26.02,932.41 L26.25,932.97 L19.69,931.12 L19.69,925.38 L26.25,923.53 L26.02,924.09 L22.68,918.15 L26.75,914.08 L32.69,917.42Z" fill="none" stroke="#616161" stroke-width="2" stroke-linejoin="round"/><circle cx="36.85" cy="928.25" r="4.2" fill="none" stroke="#616161" stroke-width="2"/><rect x="24.75" y="973.75" width="18.5" height="16" rx="1.5" fill="none" stroke="#616161" stroke-width="1.5"/><path d="M24.75,978.3 H43.25" stroke="#616161" stroke-width="1.5"/><path d="M76,973 V977 M84.5,973 V977 M74.5,977 H86 V981.5 A5.75,5.75 0 0 1 74.5,981.5Z M80.25,987 V991.5" fill="none" stroke="#616161" stroke-width="1.5" stroke-linecap="round"/><circle cx="1516.8" cy="973.4" r="1.6" fill="#333"/><circle cx="1526.8" cy="973.4" r="1.6" fill="#333"/><path d="M1516.5,976.5 C1518,974.5 1525,974.5 1527,976.5 C1528,979 1529,987 1530,990 C1527,992 1524,992.5 1521.8,992.5 C1519.5,992.5 1516.5,992 1513.5,990 C1514.5,987 1515.5,979 1516.5,976.5Z" fill="none" stroke="#333" stroke-width="1.4"/><rect x="1517" y="977" width="4.5" height="3" rx="1" fill="#333"/><rect x="1522.3" y="977" width="4.5" height="3" rx="1" fill="#333"/><ellipse cx="1521.8" cy="984.3" rx="3" ry="3.8" fill="none" stroke="#333" stroke-width="1.2"/><path d="M1563,985.5 C1563,978 1564,974 1569,973" fill="none" stroke="#444" stroke-width="1.4"/><path d="M1560.2,991.3 L1571,980.5" stroke="#444" stroke-width="1.4"/><circle cx="1574.5" cy="977" r="3.8" fill="#333"/><path d="M1575.5,984 V988.2 H1567.5 M1566.3,989.5 A2.3,2.3 0 0 0 1570.5,989.5" fill="none" stroke="#444" stroke-width="1.4"/><path d="M1056,76.5 L1050.8,81.3 L1056,86.1 M1060.3,76.5 L1065.5,81.3 L1060.3,86.1" fill="none" stroke="#c6703b" stroke-width="1.7" stroke-linecap="round" stroke-linejoin="round"/><path d="M1355.6,75 L1367.4,86.6 M1367.4,75 L1355.6,86.6" stroke="#424242" stroke-width="1.4" stroke-linecap="round"/><path d="M1400.5,72 H1408.5 M1402,72 V78 L1396.5,89.5 A0.8,0.8 0 0 0 1397.2,90.5 H1411.8 A0.8,0.8 0 0 0 1412.5,89.5 L1407,78 V72 M1399,84.8 H1410" fill="none" stroke="#424242" stroke-width="1.5" stroke-linejoin="round"/><path d="M1415,72.5 C1415.4,75.2 1416,75.8 1418.6,76.1 C1416,76.5 1415.4,77 1415,79.7 C1414.6,77 1414,76.5 1411.4,76.1 C1414,75.8 1414.6,75.2 1415,72.5Z" fill="none" stroke="#424242" stroke-width="1.3" stroke-linejoin="round"/><path d="M1451.5,89 H1441 A1.5,1.5 0 0 1 1439.5,87.5 V73 A1.5,1.5 0 0 1 1441,71.5 H1455.5 A1.5,1.5 0 0 1 1457,73 V80.5 M1448,71.5 V89" fill="none" stroke="#424242" stroke-width="1.5"/><circle cx="1455.3" cy="84.6" r="3.1" fill="none" stroke="#424242" stroke-width="1.5"/><path d="M1453,87 L1450,90.3" stroke="#424242" stroke-width="1.5" stroke-linecap="round"/><circle cx="1480.6" cy="74.2" r="2.8" fill="none" stroke="#424242" stroke-width="1.5"/><circle cx="1494.6" cy="89.2" r="2.8" fill="none" stroke="#424242" stroke-width="1.5"/><path d="M1480.6,77 V85.5 A2.5,2.5 0 0 0 1483.1,88 H1488 M1485.8,85.6 L1488.2,88 L1485.8,90.4 M1494.6,86.4 V76.7 A2.5,2.5 0 0 0 1492.1,74.2 H1487.5 M1489.7,71.8 L1487.3,74.2 L1489.7,76.6" fill="none" stroke="#424242" stroke-width="1.5" stroke-linecap="round" stroke-linejoin="round"/><rect x="1520" y="71.5" width="17.5" height="17.5" rx="1.8" fill="none" stroke="#424242" stroke-width="1.5"/><path d="M1528.75,71.5 V89" stroke="#424242" stroke-width="1.5"/><circle cx="1560" cy="80.8" r="1.5" fill="#424242"/><circle cx="1567.9" cy="80.8" r="1.5" fill="#424242"/><circle cx="1575.8" cy="80.8" r="1.5" fill="#424242"/><path d="M756.3,118.99999999999999 L763.3,125.6 L756.3,132.2" fill="none" stroke="#777" stroke-width="1.4" stroke-linecap="round" stroke-linejoin="round"/><path d="M816.3,118.99999999999999 L823.3,125.6 L816.3,132.2" fill="none" stroke="#777" stroke-width="1.4" stroke-linecap="round" stroke-linejoin="round"/><path d="M1034.3,118.99999999999999 L1041.3,125.6 L1034.3,132.2" fill="none" stroke="#777" stroke-width="1.4" stroke-linecap="round" stroke-linejoin="round"/><path d="M1061.5,119.5 L1056.5,125 L1061.5,130.5 M1066.5,119.5 L1071.5,125 L1066.5,130.5" fill="none" stroke="#c6703b" stroke-width="1.7" stroke-linecap="round" stroke-linejoin="round"/><path d="M1335.3,118.99999999999999 L1342.3,125.6 L1335.3,132.2" fill="none" stroke="#777" stroke-width="1.4" stroke-linecap="round" stroke-linejoin="round"/><path d="M1364,116.2 L1372.4,120.8 V128.6 L1361,134 L1352.6,129.4 V121.6Z M1352.6,121.6 L1361,126.2 L1372.4,120.8 M1361,126.2 V134" fill="none" stroke="#1a85d6" stroke-width="1.6" stroke-linejoin="round"/><circle cx="765.8" cy="187.2" r="7" fill="#ddb100"/><path d="M762.6,190 H769 V199 A1.6,1.6 0 0 1 767.4,200.6 H764.2 A1.6,1.6 0 0 1 762.6,199Z" fill="#ddb100"/><rect x="764.4" y="195" width="2.8" height="3.6" fill="#fff"/><g opacity="0.42"><rect x="1502.00" y="142.30" width="9.36" height="1.4" fill="#800000"/><rect x="1511.36" y="142.30" width="1.04" height="1.4" fill="#800000"/><rect x="1506.16" y="144.45" width="4.16" height="1.4" fill="#800000"/><rect x="1511.36" y="144.45" width="5.20" height="1.4" fill="#e50000"/><rect x="1516.56" y="144.45" width="1.04" height="1.4" fill="#3b3b3b"/><rect x="1517.60" y="144.45" width="10.40" height="1.4" fill="#0000ff"/><rect x="1529.04" y="144.45" width="9.36" height="1.4" fill="#0000ff"/><rect x="1539.44" y="144.45" width="18.72" height="1.4" fill="#0000ff"/><rect x="1559.20" y="144.45" width="17.68" height="1.4" fill="#0000ff"/><rect x="1576.88" y="144.45" width="1.04" height="1.4" fill="#800000"/><rect x="1510.32" y="146.59" width="4.16" height="1.4" fill="#008000"/><rect x="1515.52" y="146.59" width="6.24" height="1.4" fill="#008000"/><rect x="1522.80" y="146.59" width="7.28" height="1.4" fill="#008000"/><rect x="1531.12" y="146.59" width="3.12" height="1.4" fill="#008000"/><rect x="1510.32" y="148.74" width="4.16" height="1.4" fill="#800000"/><rect x="1515.52" y="148.74" width="5.20" height="1.4" fill="#e50000"/><rect x="1520.72" y="148.74" width="1.04" height="1.4" fill="#3b3b3b"/><rect x="1521.76" y="148.74" width="18.72" height="1.4" fill="#0000ff"/><rect x="1541.52" y="148.74" width="10.40" height="1.4" fill="#0000ff"/><rect x="1551.92" y="148.74" width="1.04" height="1.4" fill="#800000"/><rect x="1514.48" y="150.88" width="7.28" height="1.4" fill="#800000"/><rect x="1522.80" y="150.88" width="5.20" height="1.4" fill="#e50000"/><rect x="1528.00" y="150.88" width="1.04" height="1.4" fill="#3b3b3b"/><rect x="1529.04" y="150.88" width="11.44" height="1.4" fill="#0000ff"/><rect x="1541.52" y="150.88" width="17.68" height="1.4" fill="#0000ff"/><rect x="1560.24" y="150.88" width="19.76" height="1.4" fill="#0000ff"/><rect x="1518.64" y="153.03" width="4.16" height="1.4" fill="#800000"/><rect x="1523.84" y="153.03" width="5.20" height="1.4" fill="#e50000"/><rect x="1529.04" y="153.03" width="1.04" height="1.4" fill="#3b3b3b"/><rect x="1530.08" y="153.03" width="18.72" height="1.4" fill="#0000ff"/><rect x="1548.80" y="153.03" width="1.04" height="1.4" fill="#800000"/><rect x="1522.80" y="155.17" width="3.12" height="1.4" fill="#800000"/><rect x="1526.96" y="155.17" width="5.20" height="1.4" fill="#e50000"/><rect x="1532.16" y="155.17" width="1.04" height="1.4" fill="#3b3b3b"/><rect x="1533.20" y="155.17" width="24.96" height="1.4" fill="#0000ff"/><rect x="1559.20" y="155.17" width="14.56" height="1.4" fill="#0000ff"/><rect x="1574.80" y="155.17" width="5.20" height="1.4" fill="#e50000"/><rect x="1580.00" y="155.17" width="0.00" height="1.4" fill="#3b3b3b"/><rect x="1526.96" y="157.31" width="5.20" height="1.4" fill="#800000"/><rect x="1533.20" y="157.31" width="5.20" height="1.4" fill="#e50000"/><rect x="1538.40" y="157.31" width="1.04" height="1.4" fill="#3b3b3b"/><rect x="1539.44" y="157.31" width="26.00" height="1.4" fill="#0000ff"/><rect x="1565.44" y="157.31" width="1.04" height="1.4" fill="#800000"/><rect x="1566.48" y="157.31" width="5.20" height="1.4" fill="#3b3b3b"/><rect x="1572.72" y="157.31" width="4.16" height="1.4" fill="#3b3b3b"/><rect x="1577.92" y="157.31" width="2.08" height="1.4" fill="#3b3b3b"/><rect x="1522.80" y="159.46" width="4.16" height="1.4" fill="#800000"/><rect x="1526.96" y="159.46" width="1.04" height="1.4" fill="#800000"/><rect x="1518.64" y="161.61" width="5.20" height="1.4" fill="#800000"/><rect x="1523.84" y="161.61" width="1.04" height="1.4" fill="#800000"/><rect x="1514.48" y="163.75" width="8.32" height="1.4" fill="#800000"/><rect x="1522.80" y="163.75" width="1.04" height="1.4" fill="#800000"/><rect x="1510.32" y="165.90" width="5.20" height="1.4" fill="#800000"/><rect x="1515.52" y="165.90" width="1.04" height="1.4" fill="#800000"/><rect x="1510.32" y="170.19" width="4.16" height="1.4" fill="#008000"/><rect x="1515.52" y="170.19" width="5.20" height="1.4" fill="#008000"/><rect x="1521.76" y="170.19" width="6.24" height="1.4" fill="#008000"/><rect x="1529.04" y="170.19" width="3.12" height="1.4" fill="#008000"/><rect x="1510.32" y="172.33" width="9.36" height="1.4" fill="#800000"/><rect x="1520.72" y="172.33" width="7.28" height="1.4" fill="#e50000"/><rect x="1528.00" y="172.33" width="1.04" height="1.4" fill="#3b3b3b"/><rect x="1529.04" y="172.33" width="17.68" height="1.4" fill="#0000ff"/><rect x="1546.72" y="172.33" width="1.04" height="1.4" fill="#800000"/><rect x="1514.48" y="174.48" width="4.16" height="1.4" fill="#800000"/><rect x="1519.68" y="174.48" width="5.20" height="1.4" fill="#e50000"/><rect x="1524.88" y="174.48" width="1.04" height="1.4" fill="#3b3b3b"/><rect x="1525.92" y="174.48" width="19.76" height="1.4" fill="#0000ff"/><rect x="1546.72" y="174.48" width="4.16" height="1.4" fill="#e50000"/><rect x="1550.88" y="174.48" width="1.04" height="1.4" fill="#3b3b3b"/><rect x="1551.92" y="174.48" width="7.28" height="1.4" fill="#0000ff"/><rect x="1559.20" y="174.48" width="1.04" height="1.4" fill="#800000"/><rect x="1518.64" y="176.62" width="5.20" height="1.4" fill="#800000"/><rect x="1524.88" y="176.62" width="5.20" height="1.4" fill="#e50000"/><rect x="1530.08" y="176.62" width="1.04" height="1.4" fill="#3b3b3b"/><rect x="1531.12" y="176.62" width="21.84" height="1.4" fill="#0000ff"/><rect x="1552.96" y="176.62" width="1.04" height="1.4" fill="#800000"/><rect x="1554.00" y="176.62" width="5.20" height="1.4" fill="#3b3b3b"/><rect x="1559.20" y="176.62" width="6.24" height="1.4" fill="#800000"/><rect x="1565.44" y="176.62" width="1.04" height="1.4" fill="#800000"/><rect x="1518.64" y="178.77" width="2.08" height="1.4" fill="#800000"/><rect x="1520.72" y="178.77" width="1.04" height="1.4" fill="#800000"/><rect x="1521.76" y="178.77" width="18.72" height="1.4" fill="#3b3b3b"/><rect x="1540.48" y="178.77" width="3.12" height="1.4" fill="#800000"/><rect x="1543.60" y="178.77" width="1.04" height="1.4" fill="#800000"/><rect x="1514.48" y="180.91" width="5.20" height="1.4" fill="#800000"/><rect x="1519.68" y="180.91" width="1.04" height="1.4" fill="#800000"/><rect x="1510.32" y="183.06" width="10.40" height="1.4" fill="#800000"/><rect x="1520.72" y="183.06" width="1.04" height="1.4" fill="#800000"/><rect x="1510.32" y="187.35" width="4.16" height="1.4" fill="#008000"/><rect x="1515.52" y="187.35" width="7.28" height="1.4" fill="#008000"/><rect x="1523.84" y="187.35" width="7.28" height="1.4" fill="#008000"/><rect x="1532.16" y="187.35" width="3.12" height="1.4" fill="#008000"/><rect x="1510.32" y="189.49" width="4.16" height="1.4" fill="#800000"/><rect x="1515.52" y="189.49" width="5.20" height="1.4" fill="#e50000"/><rect x="1520.72" y="189.49" width="1.04" height="1.4" fill="#3b3b3b"/><rect x="1521.76" y="189.49" width="16.64" height="1.4" fill="#0000ff"/><rect x="1539.44" y="189.49" width="22.88" height="1.4" fill="#0000ff"/><rect x="1562.32" y="189.49" width="1.04" height="1.4" fill="#800000"/><rect x="1514.48" y="191.64" width="4.16" height="1.4" fill="#008000"/><rect x="1519.68" y="191.64" width="8.32" height="1.4" fill="#008000"/><rect x="1529.04" y="191.64" width="7.28" height="1.4" fill="#008000"/><rect x="1537.36" y="191.64" width="3.12" height="1.4" fill="#008000"/><rect x="1514.48" y="193.78" width="4.16" height="1.4" fill="#800000"/><rect x="1519.68" y="193.78" width="5.20" height="1.4" fill="#e50000"/><rect x="1524.88" y="193.78" width="1.04" height="1.4" fill="#3b3b3b"/><rect x="1525.92" y="193.78" width="10.40" height="1.4" fill="#0000ff"/><rect x="1537.36" y="193.78" width="18.72" height="1.4" fill="#0000ff"/><rect x="1557.12" y="193.78" width="19.76" height="1.4" fill="#0000ff"/><rect x="1576.88" y="193.78" width="1.04" height="1.4" fill="#800000"/><rect x="1518.64" y="195.93" width="4.16" height="1.4" fill="#008000"/><rect x="1523.84" y="195.93" width="7.28" height="1.4" fill="#008000"/><rect x="1532.16" y="195.93" width="7.28" height="1.4" fill="#008000"/><rect x="1540.48" y="195.93" width="3.12" height="1.4" fill="#008000"/><rect x="1518.64" y="198.07" width="4.16" height="1.4" fill="#800000"/><rect x="1523.84" y="198.07" width="5.20" height="1.4" fill="#e50000"/><rect x="1529.04" y="198.07" width="1.04" height="1.4" fill="#3b3b3b"/><rect x="1530.08" y="198.07" width="10.40" height="1.4" fill="#0000ff"/><rect x="1540.48" y="198.07" width="1.04" height="1.4" fill="#800000"/><rect x="1522.80" y="200.22" width="3.12" height="1.4" fill="#800000"/><rect x="1526.96" y="200.22" width="5.20" height="1.4" fill="#e50000"/><rect x="1532.16" y="200.22" width="1.04" height="1.4" fill="#3b3b3b"/><rect x="1533.20" y="200.22" width="24.96" height="1.4" fill="#0000ff"/><rect x="1559.20" y="200.22" width="20.80" height="1.4" fill="#0000ff"/><rect x="1522.80" y="202.36" width="2.08" height="1.4" fill="#800000"/><rect x="1525.92" y="202.36" width="5.20" height="1.4" fill="#e50000"/><rect x="1531.12" y="202.36" width="1.04" height="1.4" fill="#3b3b3b"/><rect x="1532.16" y="202.36" width="23.92" height="1.4" fill="#0000ff"/><rect x="1557.12" y="202.36" width="20.80" height="1.4" fill="#0000ff"/><rect x="1577.92" y="202.36" width="1.04" height="1.4" fill="#800000"/><rect x="1526.96" y="204.50" width="8.32" height="1.4" fill="#3b3b3b"/><rect x="1536.32" y="204.50" width="4.16" height="1.4" fill="#3b3b3b"/><rect x="1541.52" y="204.50" width="7.28" height="1.4" fill="#3b3b3b"/><rect x="1549.84" y="204.50" width="9.36" height="1.4" fill="#3b3b3b"/><rect x="1560.24" y="204.50" width="3.12" height="1.4" fill="#3b3b3b"/><rect x="1564.40" y="204.50" width="4.16" height="1.4" fill="#3b3b3b"/><rect x="1569.60" y="204.50" width="7.28" height="1.4" fill="#3b3b3b"/><rect x="1577.92" y="204.50" width="2.08" height="1.4" fill="#3b3b3b"/><rect x="1522.80" y="206.65" width="3.12" height="1.4" fill="#800000"/><rect x="1525.92" y="206.65" width="1.04" height="1.4" fill="#800000"/><rect x="1518.64" y="208.80" width="5.20" height="1.4" fill="#800000"/><rect x="1523.84" y="208.80" width="1.04" height="1.4" fill="#800000"/><rect x="1518.64" y="213.09" width="4.16" height="1.4" fill="#008000"/><rect x="1523.84" y="213.09" width="8.32" height="1.4" fill="#008000"/><rect x="1533.20" y="213.09" width="4.16" height="1.4" fill="#008000"/><rect x="1538.40" y="213.09" width="7.28" height="1.4" fill="#008000"/><rect x="1546.72" y="213.09" width="3.12" height="1.4" fill="#008000"/><rect x="1518.64" y="215.23" width="4.16" height="1.4" fill="#800000"/><rect x="1523.84" y="215.23" width="5.20" height="1.4" fill="#e50000"/><rect x="1529.04" y="215.23" width="1.04" height="1.4" fill="#3b3b3b"/><rect x="1530.08" y="215.23" width="10.40" height="1.4" fill="#0000ff"/><rect x="1540.48" y="215.23" width="1.04" height="1.4" fill="#800000"/><rect x="1522.80" y="217.38" width="3.12" height="1.4" fill="#800000"/><rect x="1526.96" y="217.38" width="5.20" height="1.4" fill="#e50000"/><rect x="1532.16" y="217.38" width="1.04" height="1.4" fill="#3b3b3b"/><rect x="1533.20" y="217.38" width="24.96" height="1.4" fill="#0000ff"/><rect x="1559.20" y="217.38" width="20.80" height="1.4" fill="#0000ff"/><rect x="1522.80" y="219.52" width="2.08" height="1.4" fill="#800000"/><rect x="1525.92" y="219.52" width="5.20" height="1.4" fill="#e50000"/><rect x="1531.12" y="219.52" width="1.04" height="1.4" fill="#3b3b3b"/><rect x="1532.16" y="219.52" width="23.92" height="1.4" fill="#0000ff"/><rect x="1557.12" y="219.52" width="20.80" height="1.4" fill="#0000ff"/><rect x="1577.92" y="219.52" width="1.04" height="1.4" fill="#800000"/><rect x="1526.96" y="221.67" width="8.32" height="1.4" fill="#3b3b3b"/><rect x="1536.32" y="221.67" width="3.12" height="1.4" fill="#3b3b3b"/><rect x="1540.48" y="221.67" width="9.36" height="1.4" fill="#3b3b3b"/><rect x="1550.88" y="221.67" width="4.16" height="1.4" fill="#3b3b3b"/><rect x="1556.08" y="221.67" width="2.08" height="1.4" fill="#3b3b3b"/><rect x="1559.20" y="221.67" width="4.16" height="1.4" fill="#3b3b3b"/><rect x="1564.40" y="221.67" width="8.32" height="1.4" fill="#3b3b3b"/><rect x="1573.76" y="221.67" width="2.08" height="1.4" fill="#3b3b3b"/><rect x="1576.88" y="221.67" width="3.12" height="1.4" fill="#3b3b3b"/><rect x="1522.80" y="223.81" width="3.12" height="1.4" fill="#800000"/><rect x="1525.92" y="223.81" width="1.04" height="1.4" fill="#800000"/><rect x="1518.64" y="225.96" width="5.20" height="1.4" fill="#800000"/><rect x="1523.84" y="225.96" width="1.04" height="1.4" fill="#800000"/><rect x="1518.64" y="230.25" width="4.16" height="1.4" fill="#008000"/><rect x="1523.84" y="230.25" width="11.44" height="1.4" fill="#008000"/><rect x="1536.32" y="230.25" width="7.28" height="1.4" fill="#008000"/><rect x="1544.64" y="230.25" width="3.12" height="1.4" fill="#008000"/><rect x="1518.64" y="232.39" width="4.16" height="1.4" fill="#800000"/><rect x="1523.84" y="232.39" width="5.20" height="1.4" fill="#e50000"/><rect x="1529.04" y="232.39" width="1.04" height="1.4" fill="#3b3b3b"/><rect x="1530.08" y="232.39" width="10.40" height="1.4" fill="#0000ff"/><rect x="1540.48" y="232.39" width="1.04" height="1.4" fill="#800000"/><rect x="1522.80" y="234.54" width="3.12" height="1.4" fill="#800000"/><rect x="1526.96" y="234.54" width="5.20" height="1.4" fill="#e50000"/><rect x="1532.16" y="234.54" width="1.04" height="1.4" fill="#3b3b3b"/><rect x="1533.20" y="234.54" width="24.96" height="1.4" fill="#0000ff"/><rect x="1559.20" y="234.54" width="20.80" height="1.4" fill="#0000ff"/><rect x="1522.80" y="236.68" width="2.08" height="1.4" fill="#800000"/><rect x="1525.92" y="236.68" width="5.20" height="1.4" fill="#e50000"/><rect x="1531.12" y="236.68" width="1.04" height="1.4" fill="#3b3b3b"/><rect x="1532.16" y="236.68" width="23.92" height="1.4" fill="#0000ff"/><rect x="1557.12" y="236.68" width="20.80" height="1.4" fill="#0000ff"/><rect x="1577.92" y="236.68" width="1.04" height="1.4" fill="#800000"/><rect x="1526.96" y="238.83" width="8.32" height="1.4" fill="#3b3b3b"/><rect x="1536.32" y="238.83" width="3.12" height="1.4" fill="#3b3b3b"/><rect x="1540.48" y="238.83" width="11.44" height="1.4" fill="#3b3b3b"/><rect x="1552.96" y="238.83" width="2.08" height="1.4" fill="#3b3b3b"/><rect x="1556.08" y="238.83" width="4.16" height="1.4" fill="#3b3b3b"/><rect x="1561.28" y="238.83" width="8.32" height="1.4" fill="#3b3b3b"/><rect x="1570.64" y="238.83" width="5.20" height="1.4" fill="#3b3b3b"/><rect x="1576.88" y="238.83" width="3.12" height="1.4" fill="#3b3b3b"/><rect x="1522.80" y="240.97" width="3.12" height="1.4" fill="#800000"/><rect x="1525.92" y="240.97" width="1.04" height="1.4" fill="#800000"/><rect x="1518.64" y="243.12" width="5.20" height="1.4" fill="#800000"/><rect x="1523.84" y="243.12" width="1.04" height="1.4" fill="#800000"/><rect x="1514.48" y="245.26" width="5.20" height="1.4" fill="#800000"/><rect x="1519.68" y="245.26" width="1.04" height="1.4" fill="#800000"/><rect x="1510.32" y="247.41" width="5.20" height="1.4" fill="#800000"/><rect x="1515.52" y="247.41" width="1.04" height="1.4" fill="#800000"/><rect x="1510.32" y="251.69" width="4.16" height="1.4" fill="#008000"/><rect x="1515.52" y="251.69" width="6.24" height="1.4" fill="#008000"/><rect x="1522.80" y="251.69" width="7.28" height="1.4" fill="#008000"/><rect x="1531.12" y="251.69" width="4.16" height="1.4" fill="#008000"/><rect x="1536.32" y="251.69" width="7.28" height="1.4" fill="#008000"/><rect x="1544.64" y="251.69" width="3.12" height="1.4" fill="#008000"/><rect x="1510.32" y="253.84" width="4.16" height="1.4" fill="#800000"/><rect x="1515.52" y="253.84" width="5.20" height="1.4" fill="#e50000"/><rect x="1520.72" y="253.84" width="1.04" height="1.4" fill="#3b3b3b"/><rect x="1521.76" y="253.84" width="18.72" height="1.4" fill="#0000ff"/><rect x="1541.52" y="253.84" width="9.36" height="1.4" fill="#0000ff"/><rect x="1551.92" y="253.84" width="23.92" height="1.4" fill="#0000ff"/><rect x="1575.84" y="253.84" width="1.04" height="1.4" fill="#800000"/><rect x="1514.48" y="255.99" width="17.68" height="1.4" fill="#800000"/><rect x="1518.64" y="258.13" width="5.20" height="1.4" fill="#e50000"/><rect x="1523.84" y="258.13" width="1.04" height="1.4" fill="#3b3b3b"/><rect x="1524.88" y="258.13" width="6.24" height="1.4" fill="#0000ff"/><rect x="1518.64" y="260.27" width="7.28" height="1.4" fill="#e50000"/><rect x="1525.92" y="260.27" width="1.04" height="1.4" fill="#3b3b3b"/><rect x="1526.96" y="260.27" width="6.24" height="1.4" fill="#0000ff"/><rect x="1518.64" y="262.42" width="7.28" height="1.4" fill="#e50000"/><rect x="1525.92" y="262.42" width="1.04" height="1.4" fill="#3b3b3b"/><rect x="1526.96" y="262.42" width="12.48" height="1.4" fill="#0000ff"/><rect x="1518.64" y="264.56" width="5.20" height="1.4" fill="#e50000"/><rect x="1523.84" y="264.56" width="1.04" height="1.4" fill="#3b3b3b"/><rect x="1524.88" y="264.56" width="22.88" height="1.4" fill="#0000ff"/><rect x="1547.76" y="264.56" width="1.04" height="1.4" fill="#800000"/><rect x="1514.48" y="266.71" width="18.72" height="1.4" fill="#800000"/><rect x="1533.20" y="266.71" width="1.04" height="1.4" fill="#800000"/><rect x="1514.48" y="268.86" width="17.68" height="1.4" fill="#800000"/><rect x="1518.64" y="271.00" width="5.20" height="1.4" fill="#e50000"/><rect x="1523.84" y="271.00" width="1.04" height="1.4" fill="#3b3b3b"/><rect x="1524.88" y="271.00" width="5.20" height="1.4" fill="#0000ff"/><rect x="1531.12" y="271.00" width="6.24" height="1.4" fill="#0000ff"/><rect x="1518.64" y="273.14" width="7.28" height="1.4" fill="#e50000"/><rect x="1525.92" y="273.14" width="1.04" height="1.4" fill="#3b3b3b"/><rect x="1526.96" y="273.14" width="9.36" height="1.4" fill="#0000ff"/><rect x="1518.64" y="275.29" width="7.28" height="1.4" fill="#e50000"/><rect x="1525.92" y="275.29" width="1.04" height="1.4" fill="#3b3b3b"/><rect x="1526.96" y="275.29" width="17.68" height="1.4" fill="#0000ff"/><rect x="1518.64" y="277.44" width="5.20" height="1.4" fill="#e50000"/><rect x="1523.84" y="277.44" width="1.04" height="1.4" fill="#3b3b3b"/><rect x="1524.88" y="277.44" width="22.88" height="1.4" fill="#0000ff"/><rect x="1547.76" y="277.44" width="1.04" height="1.4" fill="#800000"/><rect x="1514.48" y="279.58" width="18.72" height="1.4" fill="#800000"/><rect x="1533.20" y="279.58" width="1.04" height="1.4" fill="#800000"/><rect x="1514.48" y="281.73" width="17.68" height="1.4" fill="#800000"/><rect x="1518.64" y="283.87" width="5.20" height="1.4" fill="#e50000"/><rect x="1523.84" y="283.87" width="1.04" height="1.4" fill="#3b3b3b"/><rect x="1524.88" y="283.87" width="5.20" height="1.4" fill="#0000ff"/><rect x="1531.12" y="283.87" width="5.20" height="1.4" fill="#0000ff"/><rect x="1518.64" y="286.01" width="7.28" height="1.4" fill="#e50000"/><rect x="1525.92" y="286.01" width="1.04" height="1.4" fill="#3b3b3b"/><rect x="1526.96" y="286.01" width="7.28" height="1.4" fill="#0000ff"/><rect x="1518.64" y="288.16" width="7.28" height="1.4" fill="#e50000"/><rect x="1525.92" y="288.16" width="1.04" height="1.4" fill="#3b3b3b"/><rect x="1526.96" y="288.16" width="12.48" height="1.4" fill="#0000ff"/><rect x="1518.64" y="290.31" width="8.32" height="1.4" fill="#e50000"/><rect x="1526.96" y="290.31" width="1.04" height="1.4" fill="#3b3b3b"/><rect x="1528.00" y="290.31" width="16.64" height="1.4" fill="#0000ff"/><rect x="1544.64" y="290.31" width="1.04" height="1.4" fill="#800000"/><rect x="1514.48" y="292.45" width="18.72" height="1.4" fill="#800000"/><rect x="1533.20" y="292.45" width="1.04" height="1.4" fill="#800000"/><rect x="1510.32" y="294.60" width="5.20" height="1.4" fill="#800000"/><rect x="1515.52" y="294.60" width="1.04" height="1.4" fill="#800000"/><rect x="1506.16" y="296.74" width="5.20" height="1.4" fill="#800000"/><rect x="1511.36" y="296.74" width="1.04" height="1.4" fill="#800000"/><rect x="1502.00" y="298.88" width="10.40" height="1.4" fill="#800000"/><rect x="1512.40" y="298.88" width="1.04" height="1.4" fill="#800000"/></g><path d="M524.3,70 V89.6 M514.5,79.8 H534.1" stroke="#424242" stroke-width="1.5"/><rect x="557.05" y="70.95" width="16.8" height="4.1" rx="1.1" fill="none" stroke="#424242" stroke-width="1.5"/><path d="M559.25,70.95 V73.20" stroke="#424242" stroke-width="0.9"/><path d="M561.73,70.95 V73.20" stroke="#424242" stroke-width="0.9"/><path d="M564.21,70.95 V73.20" stroke="#424242" stroke-width="0.9"/><path d="M566.69,70.95 V73.20" stroke="#424242" stroke-width="0.9"/><path d="M569.17,70.95 V73.20" stroke="#424242" stroke-width="0.9"/><path d="M571.65,70.95 V73.20" stroke="#424242" stroke-width="0.9"/><rect x="557.05" y="78.85" width="16.8" height="4.1" rx="1.1" fill="none" stroke="#424242" stroke-width="1.5"/><path d="M559.25,78.85 V81.11" stroke="#424242" stroke-width="0.9"/><path d="M561.73,78.85 V81.11" stroke="#424242" stroke-width="0.9"/><path d="M564.21,78.85 V81.11" stroke="#424242" stroke-width="0.9"/><path d="M566.69,78.85 V81.11" stroke="#424242" stroke-width="0.9"/><path d="M569.17,78.85 V81.11" stroke="#424242" stroke-width="0.9"/><path d="M571.65,78.85 V81.11" stroke="#424242" stroke-width="0.9"/><rect x="557.05" y="86.75" width="16.8" height="4.1" rx="1.1" fill="none" stroke="#424242" stroke-width="1.5"/><path d="M559.25,86.75 V89.00" stroke="#424242" stroke-width="0.9"/><path d="M561.73,86.75 V89.00" stroke="#424242" stroke-width="0.9"/><path d="M564.21,86.75 V89.00" stroke="#424242" stroke-width="0.9"/><path d="M566.69,86.75 V89.00" stroke="#424242" stroke-width="0.9"/><path d="M569.17,86.75 V89.00" stroke="#424242" stroke-width="0.9"/><path d="M571.65,86.75 V89.00" stroke="#424242" stroke-width="0.9"/><path d="M596.2,76.4 A9.8,9.8 0 1 1 597,86.2" fill="none" stroke="#424242" stroke-width="1.6"/><path d="M595,71.5 V76.6 H600" fill="none" stroke="#424242" stroke-width="1.6"/><path d="M605.3,75 V81.5 L609.7,85.8" fill="none" stroke="#424242" stroke-width="1.6"/><path d="M118,151.2 L124.6,157.8 L131.2,151.2" fill="none" stroke="#3b3b3b" stroke-width="1.5" stroke-linecap="round" stroke-linejoin="round"/><path d="M582,148.5 L594.5,161 M594.5,148.5 L582,161" stroke="#3b3b3b" stroke-width="1.6" stroke-linecap="round"/><circle cx="134" cy="351.8" r="3.2" fill="#388a34"/><circle cx="134" cy="401.6" r="3.2" fill="#388a34"/><circle cx="134" cy="451.8" r="3.2" fill="#388a34"/><path d="M266.9,635.8 H259.9 V617.6 H270.2 L275.9,623.3 V625.7 M270.2,617.6 V623.3 H275.9 M275.3,629 V639.6 M269.9,634.4 H280.7" fill="none" stroke="#fff" stroke-width="1.7"/><path d="M250.8,707.2 L256.9,713.3 L270.2,697.4" fill="none" stroke="#3b3b3b" stroke-width="1.5" stroke-linecap="round" stroke-linejoin="round"/><path d="M382.40000000000003,707.2 L388.5,713.3 L401.8,697.4" fill="none" stroke="#3b3b3b" stroke-width="1.5" stroke-linecap="round" stroke-linejoin="round"/><path d="M487.3,707.2 L493.4,713.3 L506.7,697.4" fill="none" stroke="#3b3b3b" stroke-width="1.5" stroke-linecap="round" stroke-linejoin="round"/><path d="M595.5,709.5 L602.4,702.6 L609.3,709.5" fill="none" stroke="#3b3b3b" stroke-width="1.5" stroke-linecap="round" stroke-linejoin="round"/><path d="M584,876.3 L603,884.5 L584,892.7 L587.5,884.5Z M587.5,884.5 H595" fill="none" stroke="#6b6b6b" stroke-width="1.3" stroke-linejoin="round"/><circle cx="110.2" cy="939.4" r="3.1" fill="none" stroke="#3b3b3b" stroke-width="1.6"/><path d="M113.4,935.6 V941.2 Q113.4,943.2 115.4,943.2 Q118.4,943.2 118.4,939.4 A8.1,8.1 0 1 0 114.6,946.3" fill="none" stroke="#3b3b3b" stroke-width="1.6" stroke-linecap="round"/><rect x="138.55" y="930.85" width="13.1" height="3.2" rx="1.1" fill="none" stroke="#3b3b3b" stroke-width="1.3"/><path d="M140.75,930.85 V932.61" stroke="#3b3b3b" stroke-width="0.9"/><path d="M142.49,930.85 V932.61" stroke="#3b3b3b" stroke-width="0.9"/><path d="M144.23,930.85 V932.61" stroke="#3b3b3b" stroke-width="0.9"/><path d="M145.97,930.85 V932.61" stroke="#3b3b3b" stroke-width="0.9"/><path d="M147.71,930.85 V932.61" stroke="#3b3b3b" stroke-width="0.9"/><path d="M149.45,930.85 V932.61" stroke="#3b3b3b" stroke-width="0.9"/><rect x="138.55" y="936.90" width="13.1" height="3.2" rx="1.1" fill="none" stroke="#3b3b3b" stroke-width="1.3"/><path d="M140.75,936.90 V938.66" stroke="#3b3b3b" stroke-width="0.9"/><path d="M142.49,936.90 V938.66" stroke="#3b3b3b" stroke-width="0.9"/><path d="M144.23,936.90 V938.66" stroke="#3b3b3b" stroke-width="0.9"/><path d="M145.97,936.90 V938.66" stroke="#3b3b3b" stroke-width="0.9"/><path d="M147.71,936.90 V938.66" stroke="#3b3b3b" stroke-width="0.9"/><path d="M149.45,936.90 V938.66" stroke="#3b3b3b" stroke-width="0.9"/><rect x="138.55" y="942.95" width="13.1" height="3.2" rx="1.1" fill="none" stroke="#3b3b3b" stroke-width="1.3"/><path d="M140.75,942.95 V944.71" stroke="#3b3b3b" stroke-width="0.9"/><path d="M142.49,942.95 V944.71" stroke="#3b3b3b" stroke-width="0.9"/><path d="M144.23,942.95 V944.71" stroke="#3b3b3b" stroke-width="0.9"/><path d="M145.97,942.95 V944.71" stroke="#3b3b3b" stroke-width="0.9"/><path d="M147.71,942.95 V944.71" stroke="#3b3b3b" stroke-width="0.9"/><path d="M149.45,942.95 V944.71" stroke="#3b3b3b" stroke-width="0.9"/><path d="M180.2,930.6 V943.5 M173.9,931.8 H186.6 M175.2,932 L172.6,939.6 A2.7,2.7 0 0 0 177.8,939.6Z M185.3,932 L182.7,939.6 A2.7,2.7 0 0 0 187.9,939.6Z" fill="none" stroke="#3b3b3b" stroke-width="1.3" stroke-linejoin="round"/><path d="M174.6,946.6 Q175.5,942.6 180.2,942.6 Q184.9,942.6 185.8,946.6Z" fill="#3b3b3b"/><path d="M0,0 L5.2,0 L0,5.2Z" fill="#000"/><path d="M6,0 L0,6" stroke="#fff" stroke-width="1.3"/><path d="M1603,0 L1597.8,0 L1603,5.2Z" fill="#000"/><path d="M1597,0 L1603,6" stroke="#fff" stroke-width="1.3"/><path d="M0,1000 L5.2,1000 L0,994.8Z" fill="#000"/><path d="M6,1000 L0,994" stroke="#fff" stroke-width="1.3"/><path d="M1603,1000 L1597.8,1000 L1603,994.8Z" fill="#000"/><path d="M1597,1000 L1603,994" stroke="#fff" stroke-width="1.3"/>
</svg>
</div></body></html>
